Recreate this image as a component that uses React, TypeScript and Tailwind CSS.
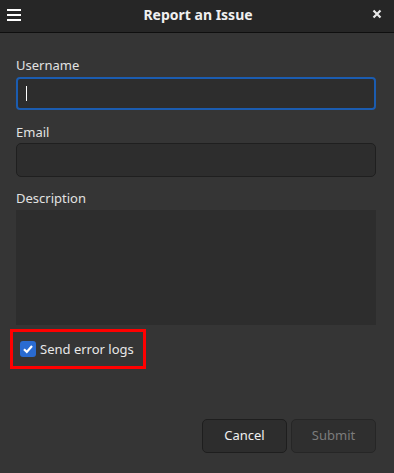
import React from 'react';

const App: React.FC = () => {
  return (
    <div
      className="w-[394px] h-[473px] bg-[#353535] flex flex-col text-[#e8e8e8]"
      style={{ fontFamily: '"Noto Sans", "Open Sans", sans-serif' }}
    >
      {/* header */}
      <div className="h-[33px] bg-[#262626] border-b border-[#0f0f0f] flex items-center justify-between px-[7px] shrink-0">
        <div className="flex flex-col gap-[3px] w-[14px] -mt-[3px]">
          <span className="h-[2px] bg-white" />
          <span className="h-[2px] bg-white" />
          <span className="h-[2px] bg-white" />
        </div>
        <h3 className="text-[14px] font-bold text-[#f0f0f0] leading-none -mt-[2px] ml-[4px]">Report an Issue</h3>
        <svg width="12" height="12" viewBox="0 0 12 12" className="mr-[4px] -mt-[4px]">
          <path d="M2.5 2.5 L9.5 9.5 M9.5 2.5 L2.5 9.5" stroke="#e8e8e8" strokeWidth="2.2" />
        </svg>
      </div>

      <div className="flex flex-col px-4 pt-[24px] flex-1">
        <label className="text-[13px] leading-[16px] text-[#e2e2e2] mb-[4px]">Username</label>
        <div className="h-[33px] w-[360px] rounded-[4px] border-2 border-[#1b5cb0] bg-[#2d2d2d] flex items-center pl-[8px]">
          <span className="w-px h-[15px] bg-white" />
        </div>

        <label className="text-[13px] leading-[16px] text-[#e2e2e2] mt-[14px] mb-[3px]">Email</label>
        <div className="h-[34px] w-[360px] rounded-[5px] border border-[#1f1f1f] bg-[#2d2d2d]" />

        <label className="text-[13px] leading-[16px] text-[#e2e2e2] mt-[13px] mb-[4px]">Description</label>
        <div className="h-[115px] w-[360px] bg-[#2d2d2d]" />

        <div className="mt-[4px] -ml-[6px] w-[136px] h-[40px] border-[3px] border-[#ff0000] flex items-center pl-[7px] gap-[4px]">
          <div className="w-[16px] h-[16px] rounded-[3px] bg-[#2a6bd1] flex items-center justify-center">
            <svg width="12" height="12" viewBox="0 0 12 12">
              <path d="M2 6.2 L4.8 9 L10 3" stroke="white" strokeWidth="2.2" fill="none" />
            </svg>
          </div>
          <span className="text-[13px] text-[#e8e8e8] leading-none">Send error logs</span>
        </div>

        <div className="flex justify-end gap-[4px] mt-[50px] mr-[2px]">
          <button className="w-[85px] h-[34px] rounded-[5px] border border-[#1e1e1e] bg-[#2d2d2d] text-[13px] text-[#f0f0f0]">
            Cancel
          </button>
          <button className="w-[85px] h-[34px] rounded-[5px] border border-[#262626] bg-[#2f2f2f] text-[13px] text-[#7c7c7c]">
            Submit
          </button>
        </div>
      </div>
    </div>
  );
};

export default App;
